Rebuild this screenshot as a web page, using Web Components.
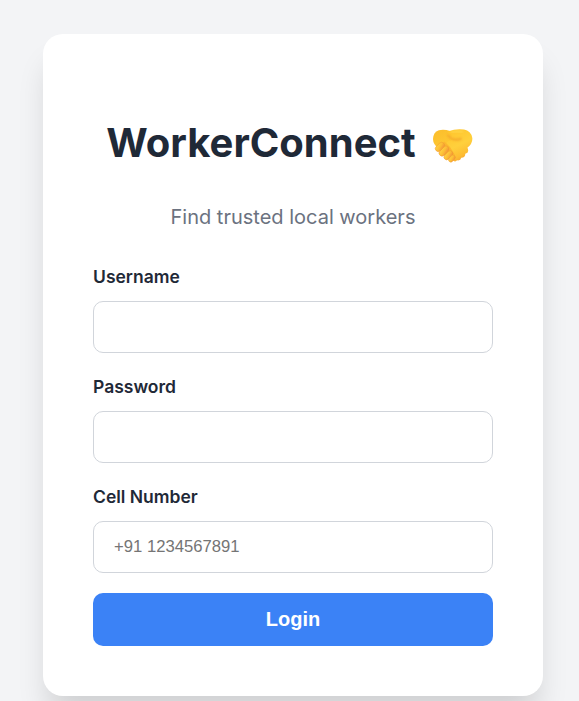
<!DOCTYPE html>
<html lang="en"><head><meta charset="utf-8"><title>WorkerConnect</title>
<style>
html,body{margin:0;height:100%;overflow:hidden}
body{background:#f3f4f6;font-family:Inter,sans-serif;color:#1f2937}
</style></head><body>
<login-page></login-page>
<script>
const define=(name,html)=>customElements.define(name,class extends HTMLElement{
  constructor(){super();this.attachShadow({mode:'open'}).innerHTML=html;}
});

define('hand-shake',`<style>:host{display:block;width:40px;height:34px}svg{display:block}</style>
<svg width="40" height="34" viewBox="0 0 40 34" aria-label="handshake">
<defs>
<linearGradient id="a" x1="0" y1="0" x2=".5" y2="1"><stop offset="0" stop-color="#fbbd2b"/><stop offset="1" stop-color="#ffcb35"/></linearGradient>
<linearGradient id="b" x1=".3" y1="0" x2=".75" y2="1"><stop offset="0" stop-color="#ffc52d"/><stop offset=".5" stop-color="#ffd03c"/><stop offset=".8" stop-color="#fdbc32"/><stop offset="1" stop-color="#f39a35"/></linearGradient>
<linearGradient id="c" x1=".2" y1="0" x2=".7" y2="1"><stop offset="0" stop-color="#ffd443"/><stop offset=".55" stop-color="#fdbd35"/><stop offset="1" stop-color="#f29638"/></linearGradient>
<filter id="s" x="-30%" y="-60%" width="160%" height="220%"><feGaussianBlur stdDeviation=".8"/></filter>
</defs>
<path d="M5.800 1.200Q11-.2 17 2L24 8L17 24L6 20Q0 15.500 0 10Q.3 3 5.800 1.200Z" fill="url(#a)"/>
<path d="M15.500 2.200Q23-.6 31 .5Q38 1.500 39.300 9Q39.800 14.500 34.500 18.500L35 20.500Q36 24 32.300 24.800Q32.300 28.800 28.300 28.800Q27.500 32 24 31.300Q22.500 33.500 20 31.500L10 20.500L15 12L22 10.500Q16 9.500 14.500 5.500Q14.300 3.200 15.500 2.200Z" fill="url(#b)"/>
<path d="M14.800 5.500Q17 10 22.500 10.600Q26 10.900 28.500 9.500" fill="none" stroke="#ee9128" stroke-width="1.700" opacity=".75" filter="url(#s)"/>
<path d="M18 3.200Q24 1.500 30 3" fill="none" stroke="#ffdd56" stroke-width="1.800" opacity=".8" filter="url(#s)"/>
<path d="M6 17L11.500 12.500L17 18L22 26L21 29L17 31L8 24Z" fill="#fbb62f"/>
<g fill="url(#c)" stroke="#ef9830" stroke-width=".5">
<rect x="1.700" y="15" width="10.600" height="6" rx="3" transform="rotate(-44 7 18)"/>
<rect x="5.200" y="19.200" width="11.600" height="5.800" rx="2.900" transform="rotate(-46 11 22.100)"/>
<rect x="10.200" y="23.600" width="10.400" height="5.400" rx="2.700" transform="rotate(-45 15.400 26.300)"/>
<rect x="15" y="27.300" width="7.800" height="4.600" rx="2.300" transform="rotate(-48 18.900 29.600)"/></g>
</svg>`);

define('brand-title',`<style>
:host{display:flex;justify-content:center;height:48px;padding-right:7px}
h1{margin:0;font-size:40px;line-height:48px;font-weight:700;white-space:pre}
hand-shake{margin:10px 0 0 17px}
</style><h1><slot></slot></h1><hand-shake></hand-shake>`);

customElements.define('form-field',class extends HTMLElement{
  constructor(){super();this.attachShadow({mode:'open'}).innerHTML=`<style>
:host{display:block;height:110px}
label{display:block;height:22px;line-height:22px;font-size:17.500px;font-weight:600;margin-bottom:13px}
input{display:block;box-sizing:border-box;width:100%;height:52px;margin:0;padding:0 20px;border:1px solid #d1d5db;border-radius:10px;background:#fff;font:16.667px "Liberation Sans",Arial,sans-serif;color:#1f2937;outline:0}
input::placeholder{color:#757575;opacity:1}
</style><label for="field"><slot></slot></label><input id="field">`;
  const input=this.shadowRoot.querySelector('input');
  input.type=this.getAttribute('type')||'text';
  input.placeholder=this.getAttribute('placeholder')||'';}
});

define('login-button',`<style>
:host{display:block}
button{display:block;width:100%;height:53px;border:0;border-radius:10px;background:#3b82f6;color:#fff;font:700 20px "Liberation Sans",Arial,sans-serif;padding:0}
</style><button><slot></slot></button>`);

define('login-card',`<style>
:host{display:block;box-sizing:border-box;width:500px;height:662px;padding:85px 50px 50px;border-radius:20px;background:#fff;box-shadow:0 25px 31.250px -6.250px rgba(0,0,0,.15)}
p{margin:37px 0 36px;height:26px;line-height:26px;font-size:20px;color:#6b7280;text-align:center}
</style><slot name="title"></slot><p><slot name="subtitle"></slot></p><slot></slot>`);

define('login-page',`<style>
:host{display:flex;box-sizing:border-box;height:100%;padding:34px 0 0 43px;align-items:flex-start}
login-card{flex:none}
</style><login-card>
<brand-title slot="title">WorkerConnect</brand-title><span slot="subtitle">Find trusted local workers</span>
<form-field>Username</form-field>
<form-field type="password">Password</form-field>
<form-field type="tel" placeholder="+91 1234567891" style="height:107px">Cell Number</form-field>
<login-button>Login</login-button></login-card>`);
</script></body></html>
